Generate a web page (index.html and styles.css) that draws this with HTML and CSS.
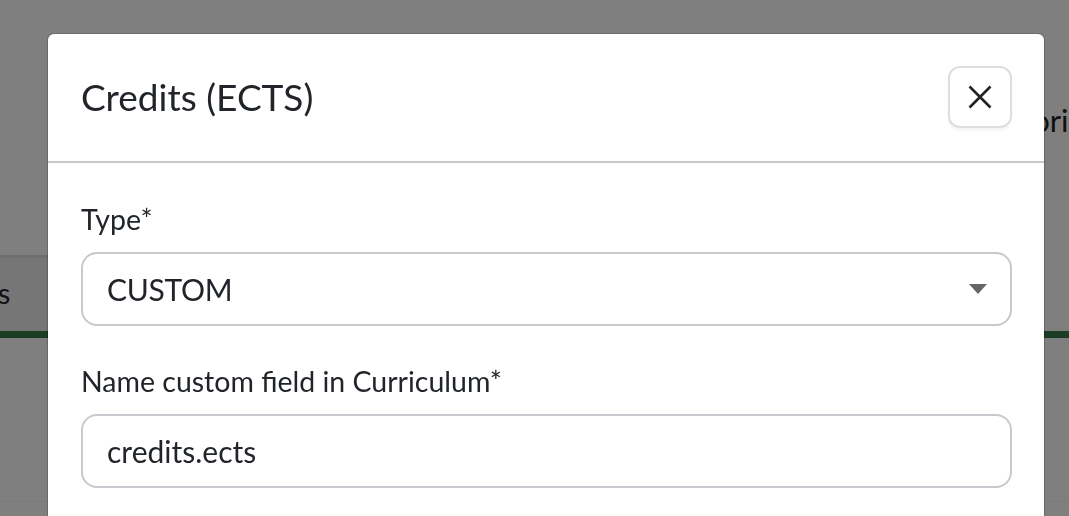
FILE: index.html
```html
<!DOCTYPE html>
<html lang="en">
<head>
<meta charset="utf-8">
<title>Credits (ECTS)</title>
<link rel="stylesheet" href="styles.css">
</head>
<body>
  <div class="page">
    <div class="page-head">
      <h2 class="page-title">Categories</h2>
    </div>
    <div class="tabbar">
      <div class="tab">Details</div>
    </div>
    <div class="page-content"></div>
  </div>

  <div class="overlay">
    <div class="modal" role="dialog" aria-labelledby="modal-title">
      <div class="modal-header">
        <h1 class="modal-title" id="modal-title">Credits (ECTS)</h1>
        <button class="close-btn" type="button" aria-label="Close">
          <svg width="24" height="24" viewBox="0 0 24 24" aria-hidden="true">
            <path d="M1.5 1.5 L22.5 22.5 M22.5 1.5 L1.5 22.5" stroke="#222" stroke-width="2.6" stroke-linecap="butt" fill="none"/>
          </svg>
        </button>
      </div>
      <div class="modal-body">
        <div class="field">
          <label class="field-label">Type*</label>
          <div class="select" role="combobox" aria-expanded="false">
            <span class="select-value">CUSTOM</span>
            <svg class="select-arrow" width="18" height="10" viewBox="0 0 18 10" aria-hidden="true">
              <path d="M0 0 H18 L9 10 Z" fill="#666"/>
            </svg>
          </div>
        </div>
        <div class="field">
          <label class="field-label" for="cf">Name custom field in Curriculum*</label>
          <input class="text-input" id="cf" type="text" value="credits.ects">
        </div>
      </div>
    </div>
  </div>
</body>
</html>
```

FILE: styles.css
```css
* { box-sizing: border-box; }

html, body {
  margin: 0;
  padding: 0;
}

body {
  width: 1069px;
  height: 516px;
  overflow: hidden;
  background: #ffffff;
  font-family: Lato, "Liberation Sans", sans-serif;
  color: #212529;
}

/* ---------- page beneath the overlay ---------- */
.page {
  height: 516px;
  display: flex;
  flex-direction: column;
}

.page-head {
  height: 255px;
  padding-top: 100px;
  white-space: nowrap;
  overflow: hidden;
}

.page-title {
  margin: 0 0 0 953px;
  font-size: 31px;
  font-weight: 400;
  line-height: 40px;
  color: #222;
}

.tabbar {
  height: 83px;
  display: flex;
  border-bottom: 7px solid #347a48;
}

.tab {
  width: 600px;
  background: #ececec;
  border-top: 3px solid #dcdcdc;
  font-size: 29px;
  line-height: 70px;
  text-indent: -78px;
  white-space: nowrap;
  overflow: hidden;
  color: #222;
}

.page-content {
  height: 164px;
  border-bottom: 1px solid #f4f4f4;
}

/* ---------- overlay & modal ---------- */
.overlay {
  position: fixed;
  inset: 0;
  background: rgba(0, 0, 0, 0.5);
  padding: 34px 0 0 48px;
  overflow: hidden;
}

.modal {
  width: 996px;
  background: #fff;
  border-radius: 6px;
  box-shadow: 0 0 0 1px rgba(0, 0, 0, 0.15), 0 2px 3px rgba(0, 0, 0, 0.12);
}

.modal-header {
  height: 129px;
  display: flex;
  align-items: center;
  justify-content: space-between;
  padding: 0 32px 1px 33px;
  border-bottom: 2px solid #c8c8c8;
}

.modal-title {
  margin: 0;
  font-size: 37px;
  font-weight: 400;
  line-height: 46px;
  color: #212529;
}

.close-btn {
  width: 64px;
  height: 62px;
  display: flex;
  align-items: center;
  justify-content: center;
  padding: 0;
  background: #fff;
  border: 2px solid #dedede;
  border-radius: 12px;
  box-shadow: 0 3px 3px rgba(0, 0, 0, 0.04);
  cursor: pointer;
}

.modal-body {
  padding: 39px 32px 120px 33px;
  display: flex;
  flex-direction: column;
  gap: 38px;
}

.field {
  display: flex;
  flex-direction: column;
  gap: 16px;
}

.field-label {
  font-size: 28.5px;
  line-height: 34px;
  color: #212529;
}

.select,
.text-input {
  width: 931px;
  height: 74px;
  flex: 0 0 74px;
  border: 2px solid #c6c9cd;
  border-radius: 16px;
  background: #fff;
  font-family: Lato, "Liberation Sans", sans-serif;
  font-size: 30px;
  color: #212529;
}

.select {
  display: flex;
  align-items: center;
  justify-content: space-between;
  padding: 0 23px 0 24px;
}

.select-value {
  letter-spacing: -0.3px;
}

.select-arrow {
  display: block;
}

.text-input {
  padding: 0 24px;
  outline: none;
}
```
